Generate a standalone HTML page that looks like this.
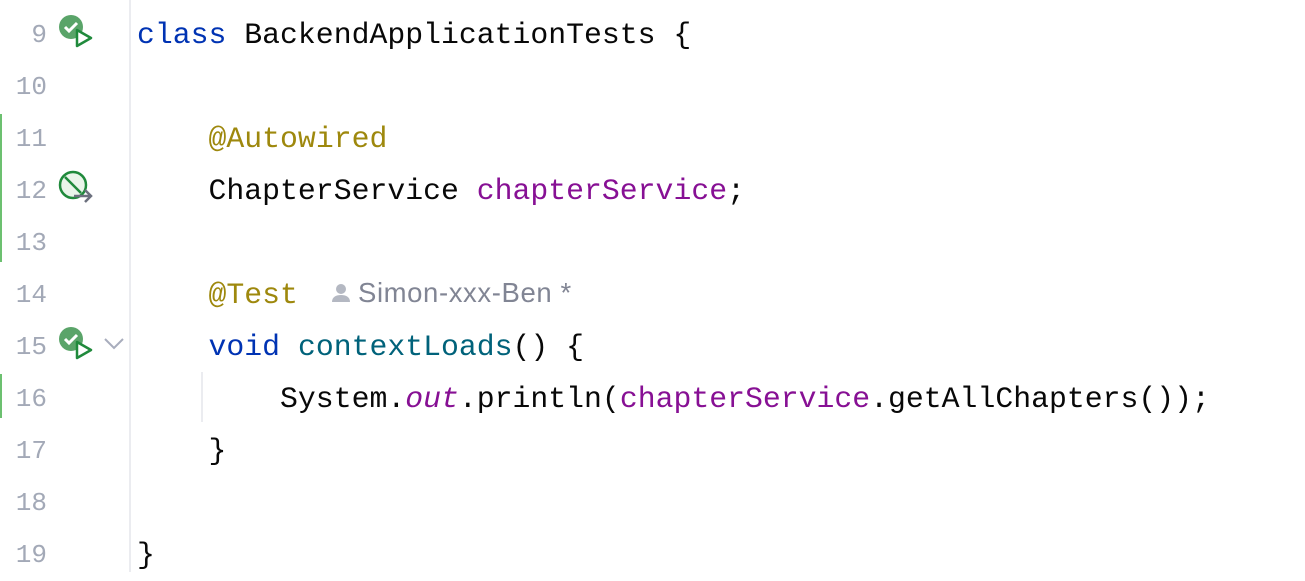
<!DOCTYPE html>
<html><head><meta charset="utf-8"><style>
body{margin:0;width:1305px;height:572px;background:#fff;overflow:hidden;position:relative;font-family:"Liberation Mono",monospace}
.ln{position:absolute;left:0;width:47px;text-align:right;font-size:26px;color:#a3a9b7;line-height:52px}
.code{position:absolute;left:137px;font-size:29.8px;line-height:52px;color:#080808;white-space:pre}
.kw{color:#0033b3}.an{color:#9e880d}.fd{color:#871094}.fn{color:#00627a}.st{color:#871094;font-style:italic}
.sep{position:absolute;left:129px;top:0;width:2px;height:572px;background:#ebecf0}
.bar{position:absolute;left:0;width:2px;background:#6cc070}
.hint{position:absolute;left:330px;top:277px;font-family:"Liberation Sans",sans-serif;font-size:27.5px;letter-spacing:0.6px;color:#818594}
</style></head><body>
<div class="sep"></div>
<div class="bar" style="top:114px;height:148px"></div>
<div class="bar" style="top:374px;height:44px"></div>
<div class="ln" style="top:9px">9</div>
<div class="ln" style="top:61px">10</div>
<div class="ln" style="top:113px">11</div>
<div class="ln" style="top:165px">12</div>
<div class="ln" style="top:217px">13</div>
<div class="ln" style="top:269px">14</div>
<div class="ln" style="top:321px">15</div>
<div class="ln" style="top:373px">16</div>
<div class="ln" style="top:425px">17</div>
<div class="ln" style="top:477px">18</div>
<div class="ln" style="top:529px">19</div>

<svg style="position:absolute;left:58px;top:14px" width="38" height="36" viewBox="0 0 38 36"><circle cx="13" cy="13" r="12" fill="#5aa469"/><path d="M7 13l4 4 8-8" stroke="#fff" stroke-width="3" fill="none"/><path d="M19 16l14 8-14 8z" fill="#fff" stroke="#208a3c" stroke-width="2.5" stroke-linejoin="round"/></svg>
<svg style="position:absolute;left:58px;top:326px" width="38" height="36" viewBox="0 0 38 36"><circle cx="13" cy="13" r="12" fill="#5aa469"/><path d="M7 13l4 4 8-8" stroke="#fff" stroke-width="3" fill="none"/><path d="M19 16l14 8-14 8z" fill="#fff" stroke="#208a3c" stroke-width="2.5" stroke-linejoin="round"/></svg>
<svg style="position:absolute;left:58px;top:170px" width="38" height="38" viewBox="0 0 38 38"><circle cx="15" cy="15" r="13" fill="#eaf5ea" stroke="#208a3c" stroke-width="2.5"/><path d="M7 7l16 16" stroke="#208a3c" stroke-width="2.5"/><path d="M16 26h17M27 20l6 6-6 6" stroke="#6c707e" stroke-width="2.5" fill="none"/></svg>
<svg style="position:absolute;left:103px;top:337px" width="22" height="14" viewBox="0 0 22 14"><path d="M2 2l9 9 9-9" stroke="#a8adbd" stroke-width="2" fill="none"/></svg>
<div style="position:absolute;left:201px;top:372px;width:2px;height:50px;background:#ebecf0"></div>

<div class="code" style="top:9px"><span class="kw">class</span> BackendApplicationTests {</div>
<div class="code" style="top:113px">    <span class="an">@Autowired</span></div>
<div class="code" style="top:165px">    ChapterService <span class="fd">chapterService</span>;</div>
<div class="code" style="top:269px">    <span class="an">@Test</span></div>
<div class="code" style="top:321px">    <span class="kw">void</span> <span class="fn">contextLoads</span>() {</div>
<div class="code" style="top:373px">        System.<span class="st">out</span>.println(<span class="fd">chapterService</span>.getAllChapters());</div>
<div class="code" style="top:425px">    }</div>
<div class="code" style="top:529px">}</div>
<div class="hint"><svg width="22" height="22" viewBox="0 0 22 22" style="vertical-align:-2px;margin-right:6px"><circle cx="11" cy="7" r="5" fill="#b4b8c2"/><path d="M2 20c0-5 4-7 9-7s9 2 9 7z" fill="#b4b8c2"/></svg>Simon-xxx-Ben *</div>
</body></html>
